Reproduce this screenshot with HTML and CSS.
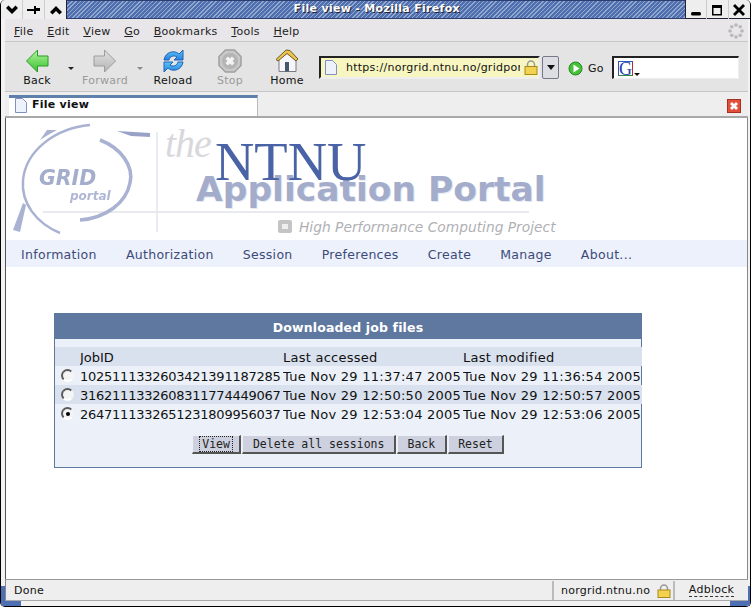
FILE: index.html
```html
<!DOCTYPE html>
<html>
<head>
  <title>File view - Mozilla Firefox</title>
  <link rel="stylesheet" href="styles.css">
</head>
<body>
<div class="window">
  <div class="titlebar">
    <div class="wm-buttons">
      <span class="wm-btn"><svg width="14" height="10" viewBox="0 0 14 10"><path d="M1 3l2.500-2.500L7 4 10.500.5 13 3 7 9z"/></svg></span>
      <span class="wm-btn"><svg width="14" height="10" viewBox="0 0 14 10"><path d="M0 4h7V1h2v2h4v3H9v3H7V6H0z"/></svg></span>
      <span class="wm-btn wm-last"><svg width="14" height="10" viewBox="0 0 14 10"><path d="M1 7l6-6 6 6-2.500 2.500L7 6 3.500 9.500z"/></svg></span>
    </div>
    <div class="title">File view - Mozilla Firefox</div>
    <div class="wm-buttons wm-right">
      <span class="wm-btn"><svg width="12" height="12" viewBox="0 0 12 12"><rect x="1" y="8" width="10" height="3.500" rx="1.500"/></svg></span>
      <span class="wm-btn"><svg width="12" height="12" viewBox="0 0 12 12"><path d="M1 1h10v10.500H1zM2.500 4v6h7V4z" fill-rule="evenodd"/></svg></span>
      <span class="wm-btn"><svg width="12" height="12" viewBox="0 0 12 12"><path d="M0 2l2-2 4 4 4-4 2 2-4 4 4 4-2 2-4-4-4 4-2-2 4-4z"/></svg></span>
    </div>
  </div>

  <div class="chrome">
    <div class="menubar">
      <span class="menu"><u>F</u>ile</span>
      <span class="menu"><u>E</u>dit</span>
      <span class="menu"><u>V</u>iew</span>
      <span class="menu"><u>G</u>o</span>
      <span class="menu"><u>B</u>ookmarks</span>
      <span class="menu"><u>T</u>ools</span>
      <span class="menu"><u>H</u>elp</span>
      <svg class="throbber" width="16" height="16" viewBox="0 0 16 16" fill="#b8b8b8">
        <circle cx="8" cy="2" r="1.800"/><circle cx="12.200" cy="3.800" r="1.800"/><circle cx="14" cy="8" r="1.800"/><circle cx="12.200" cy="12.200" r="1.800"/>
        <circle cx="8" cy="14" r="1.800"/><circle cx="3.800" cy="12.200" r="1.800"/><circle cx="2" cy="8" r="1.800"/><circle cx="3.800" cy="3.800" r="1.800"/>
      </svg>
    </div>

    <div class="toolbar">
      <div class="tool tool-back">
        <svg width="24" height="24" viewBox="0 0 24 24">
          <defs>
            <linearGradient id="green" x1="0" y1="0" x2="0" y2="1"><stop offset="0" stop-color="#b4f59a"/><stop offset="1" stop-color="#35c030"/></linearGradient>
            <linearGradient id="grey" x1="0" y1="0" x2="0" y2="1"><stop offset="0" stop-color="#e2e2e2"/><stop offset="1" stop-color="#b4b4b4"/></linearGradient>
            <linearGradient id="blue" x1="0" y1="0" x2="0" y2="1"><stop offset="0" stop-color="#58c4f4"/><stop offset="1" stop-color="#2a80e0"/></linearGradient>
          </defs>
          <path d="M12.500 1L1.500 12l11 11v-6H23V7H12.500z" fill="url(#green)" stroke="#2a9a2a"/>
        </svg>
        <span>Back</span>
      </div>
      <span class="drop drop-back"></span>
      <div class="tool tool-forward off">
        <svg width="24" height="24" viewBox="0 0 24 24"><path d="M11.500 1l11 11-11 11v-6H1V7h10.500z" fill="url(#grey)" stroke="#9c9c9c"/></svg>
        <span>Forward</span>
      </div>
      <span class="drop drop-forward off"></span>
      <div class="tool tool-reload">
        <svg width="24" height="24" viewBox="0 0 24 24"><path d="M3 11C4 5 9 2 14 3c2 .400 3 1 4 2l4-4v10h-9l3-3c-3-2-7-1-8 3z" fill="url(#blue)" stroke="#1f62b8"/><path d="M22 13c-1 6-6 9-11 8-2-.400-3-1-4-2l-4 4V13h9l-3 3c3 2 7 1 8-3z" fill="url(#blue)" stroke="#1f62b8"/></svg>
        <span>Reload</span>
      </div>
      <div class="tool tool-stop off">
        <svg width="24" height="24" viewBox="0 0 24 24"><path d="M7.500 1h9L23 7.500v9L16.500 23h-9L1 16.500v-9z" fill="#c8c8c8" stroke="#a0a0a0" stroke-width="1.500"/><circle cx="12" cy="12" r="8" fill="#b4b4b4"/><path d="M7.500 10L10 7.500l2 2 2-2 2.500 2.500-2 2 2 2-2.500 2.500-2-2-2 2L7.500 14l2-2z" fill="#f4f4f4"/></svg>
        <span>Stop</span>
      </div>
      <div class="tool tool-home">
        <svg width="24" height="24" viewBox="0 0 24 24"><path d="M4 10l8-6 9 7v11.500H4z" fill="#f6f6fa" stroke="#7a7a86"/><path d="M1 10.500L11 1l4 .500 8 8.500-2 2-9-7.500L3 12z" fill="#eec448" stroke="#6a5a2c"/><path d="M10 13h4v9.500h-4z" fill="#46566e"/></svg>
        <span>Home</span>
      </div>
      <div class="urlbar">
        <svg class="page-icon" width="12" height="15" viewBox="0 0 12 15"><path d="M.500.500h7l4 4v10H.500z" fill="#eef2fb" stroke="#8090c0"/></svg>
        <span class="url">https://norgrid.ntnu.no/gridportal</span>
        <svg class="lock" width="14" height="15" viewBox="0 0 14 15"><path d="M3.500 7V4.500a3.500 3.500 0 017 0V7" fill="none" stroke="#9a9a9a" stroke-width="1.500"/><rect x="1" y="6.500" width="12" height="8" fill="#f2d24e" stroke="#a88a1c"/></svg>
      </div>
      <div class="url-drop"><span></span></div>
      <svg class="go-icon" width="15" height="15" viewBox="0 0 15 15"><circle cx="7.500" cy="7.500" r="6.500" fill="#48c03a" stroke="#1c8a1c"/><path d="M5.500 3.500l6 4-6 4z" fill="#fff"/></svg>
      <span class="go">Go</span>
      <div class="search">
        <div class="google">G</div>
        <span class="search-drop"></span>
      </div>
    </div>

    <div class="tabbar">
      <div class="tab">
        <svg width="12" height="15" viewBox="0 0 12 15"><path d="M.500.500h7l4 4v10H.500z" fill="#eef2fb" stroke="#8090c0"/></svg>
        <span>File view</span>
      </div>
      <svg class="tab-close" width="14" height="14" viewBox="0 0 14 14"><rect x=".500" y=".500" width="13" height="13" fill="#e2503c" stroke="#a83020"/><path d="M3 5l2-2 2 2 2-2 2 2-2 2 2 2-2 2-2-2-2 2-2-2 2-2z" fill="#fff"/></svg>
    </div>
  </div>

  <div class="content">
    <div class="banner">
      <svg width="560" height="122" viewBox="0 0 560 122">
        <defs><filter id="soft"><feGaussianBlur stdDeviation=".6"/></filter></defs>
        <path d="M37 94H523" stroke="#e8eaf0" stroke-width="2"/>
        <path d="M151 14V114" stroke="#e4e6ec" stroke-width="1.500"/>
        <g filter="url(#soft)" fill="none" stroke="#a9b2d2">
          <path d="M84 7C50 10 20 32 17 62C15 85 30 105 54 115" stroke-width="2.500"/>
          <path d="M94 22C115 30 128 48 124 65C120 85 100 100 74 102" stroke-width="3.500"/>
          <path d="M111 13L144 15L144 19L125 18z" stroke-width="0" fill="#98a2c6"/>
          <path d="M34 22L41 12L51 12L42 17z" stroke-width="0" fill="#a9b2d2"/>
          <path d="M7 112L17 85L20 87L14 114z" stroke-width="0" fill="#a9b2d2"/>
          <text class="logo-grid" x="33" y="67">GRID</text>
          <text class="logo-portal" x="64" y="82">portal</text>
        </g>
        <text class="logo-the" x="159" y="39">the</text>
        <text class="logo-app-shadow" x="191" y="84">Application Portal</text>
        <text class="logo-app" x="190" y="83">Application Portal</text>
        <text class="logo-ntnu" x="209" y="62">NTNU</text>
        <rect x="272" y="102" width="14" height="13" rx="2" fill="#c4c4c4"/>
        <rect x="276" y="106" width="6" height="5" fill="#eee"/>
        <text class="logo-hpc" x="293" y="114">High Performance Computing Project</text>
      </svg>
    </div>
    <div class="nav">
      <a class="nav-item">Information</a>
      <a class="nav-item">Authorization</a>
      <a class="nav-item">Session</a>
      <a class="nav-item">Preferences</a>
      <a class="nav-item">Create</a>
      <a class="nav-item">Manage</a>
      <a class="nav-item">About...</a>
    </div>

    <div class="panel">
      <div class="panel-head">Downloaded job files</div>
      <div class="panel-body">
        <table class="jobs">
          <tr class="shade">
            <th class="radio-cell"></th><th class="col-id">JobID</th><th class="col-date">Last accessed</th><th class="col-date">Last modified</th>
          </tr>
          <tr>
            <td class="radio-cell"><span class="radio"></span></td>
            <td class="col-id">1025111332603421391187285</td>
            <td class="col-date">Tue Nov 29 11:37:47 2005</td>
            <td class="col-date">Tue Nov 29 11:36:54 2005</td>
          </tr>
          <tr class="shade">
            <td class="radio-cell"><span class="radio"></span></td>
            <td class="col-id">3162111332608311774449067</td>
            <td class="col-date">Tue Nov 29 12:50:50 2005</td>
            <td class="col-date">Tue Nov 29 12:50:57 2005</td>
          </tr>
          <tr>
            <td class="radio-cell"><span class="radio checked"></span></td>
            <td class="col-id">2647111332651231809956037</td>
            <td class="col-date">Tue Nov 29 12:53:04 2005</td>
            <td class="col-date">Tue Nov 29 12:53:06 2005</td>
          </tr>
        </table>
        <div class="actions">
          <button class="btn btn-focus"><span>View</span></button>
          <button class="btn">Delete all sessions</button>
          <button class="btn">Back</button>
          <button class="btn">Reset</button>
        </div>
      </div>
    </div>
  </div>

  <div class="statusbar">
    <div class="status status-main">Done</div>
    <div class="status status-site">norgrid.ntnu.no
      <svg width="14" height="14" viewBox="0 0 14 14"><path d="M3.500 7V4.500a3.500 3.500 0 017 0V7" fill="none" stroke="#9a9a9a" stroke-width="1.500"/><rect x="1" y="6" width="12" height="7.500" fill="#f2d24e" stroke="#a88a1c"/></svg>
    </div>
    <div class="status status-adblock"><span>Adblock</span></div>
  </div>
  <div class="grip"></div>
  <div class="corner corner-left"></div>
  <div class="corner corner-right"></div>
</div>
</body>
</html>
```

FILE: styles.css
```css
html, body {
  margin: 0;
  padding: 0;
}

body {
  width: 752px;
  height: 608px;
  overflow: hidden;
  background: #fff;
  font-family: "DejaVu Sans", sans-serif;
  font-size: 11px;
  color: #111;
}

.window {
  position: relative;
  width: 751px;
  height: 607px;
  box-sizing: border-box;
  display: flex;
  flex-direction: column;
  background: #f2f2f2;
  border: 1px solid #000;
  border-top: 0;
  border-radius: 5px;
  overflow: hidden;
}

/* title bar */
.titlebar {
  height: 19px;
  flex: none;
  display: flex;
  background: repeating-linear-gradient(135deg, #4f6fae 0, #4f6fae 2px, #93a8d0 2px, #93a8d0 3px);
  border-top: 1px solid #2c3f70;
  box-sizing: border-box;
  border-bottom: 1px solid #2c3f70;
}

.title {
  flex: 1;
  text-align: center;
  color: #fff;
  font-weight: bold;
  font-size: 11px;
  line-height: 16px;
  letter-spacing: .3px;
  padding-left: 2px;
  text-shadow: 1px 1px 0 #223;
}

.wm-buttons {
  display: flex;
  background: #eeeeee;
  margin-top: -1px;
  margin-bottom: -1px;
}

.wm-btn {
  width: 22px;
  height: 19px;
  display: flex;
  align-items: center;
  justify-content: center;
  border-right: 1px solid #ccc;
  box-sizing: border-box;
}

.wm-right .wm-btn { width: 21.500px; }
.wm-right .wm-btn:last-child { border-right: 0; }
.wm-last { border-right: 1px solid #223; }
.wm-right { border-left: 1px solid #223; border-bottom: 1px solid #223; }

/* menu and tool bars */
.chrome {
  flex: none;
  margin-left: 4px;
  margin-right: 2px;
  letter-spacing: .25px;
}

.menubar {
  height: 23px;
  box-sizing: border-box;
  padding: 2px 0 0 9px;
  display: flex;
  align-items: center;
  gap: 13.800px;
  background: #e9e6e9;
  border-bottom: 1px solid #c8c8c8;
  box-shadow: 0 1px 0 #f8f8f8;
}

.menu { color: #222; }

.throbber { margin-left: auto; margin-right: 4px; }

.toolbar {
  height: 50px;
  display: flex;
  position: relative;
  align-items: flex-start;
  background: #e4e4e4;
  border-bottom: 1px solid #c6c6c6;
  box-sizing: border-box;
}

.tool {
  display: flex;
  flex-direction: column;
  align-items: center;
  gap: 1px;
  padding-top: 7px;
}

.tool span { line-height: 13px; }
.off { color: #9a9a9a; }

.tool-back { width: 48px; margin-left: 8px; }
.tool-forward { width: 56px; margin-left: 3px; }
.tool-reload { width: 50px; margin-left: 5px; }
.tool-stop { width: 40px; margin-left: 12px; }
.tool-home { width: 44px; margin-left: 15px; }

.drop {
  width: 0;
  height: 0;
  margin-top: 25px;
  border: 3px solid transparent;
  border-top: 3px solid #222;
  border-bottom: 0;
}

.drop-back { margin-left: 7px; }
.drop-forward { margin-left: 4px; }
.drop.off { border-top-color: #8a8a8a; }

.urlbar {
  width: 221px;
  height: 23px;
  box-sizing: border-box;
  margin-top: 14px;
  margin-left: 10px;
  display: flex;
  align-items: center;
  background: #f8f6c0;
  border: 2px solid #222;
  border-right-color: #eee;
  border-bottom-color: #eee;
  padding-left: 4px;
}

.url {
  width: 174px;
  margin-left: 9px;
  overflow: hidden;
  white-space: nowrap;
  color: #111;
}

.lock { margin-left: 4px; }

.url-drop {
  width: 17px;
  height: 23px;
  box-sizing: border-box;
  margin-top: 14px;
  margin-left: 2px;
  border: 1px solid #778;
  border-radius: 2px;
  background: #dddde4;
  display: flex;
  align-items: center;
  justify-content: center;
}

.url-drop span {
  border: 4px solid transparent;
  border-top: 5px solid #111;
  border-bottom: 0;
}

.go-icon { margin-top: 19px; margin-left: 9px; }
.go { width: 16px; margin-top: 20px; margin-left: 5px; line-height: 13px; }

.search {
  position: relative;
  width: 127px;
  height: 23px;
  box-sizing: border-box;
  margin-top: 14px;
  margin-left: 8px;
  background: #fff;
  border: 2px solid #222;
  border-right: 1px solid #eee;
  border-bottom: 1px solid #eee;
  padding: 3px 0 0 4px;
}

.google {
  width: 13px;
  height: 13px;
  border: 1px solid #2a8a3a;
  border-top-color: #2a5ac0;
  border-left-color: #2a5ac0;
  border-right-color: #c02a2a;
  background: #fff;
  color: #2040b0;
  font-family: "Liberation Serif", serif;
  font-size: 18px;
  line-height: 14px;
  text-align: center;
}

.search-drop {
  position: absolute;
  left: 20px;
  top: 15px;
  border: 3px solid transparent;
  border-top: 3px solid #111;
  border-bottom: 0;
}

.tabbar {
  height: 26px;
  box-sizing: border-box;
  display: flex;
  align-items: flex-start;
  background: #eeeeee;
  border-bottom: 2px solid #a8a8a8;
}

.tab {
  width: 249px;
  height: 21px;
  margin-top: 3px;
  margin-left: 4px;
  padding-left: 6px;
  box-sizing: border-box;
  display: flex;
  gap: 5px;
  align-items: flex-start;
  background: #fff;
  border-top: 3px solid #6080ac;
  border-right: 1px solid #bbb;
  font-weight: bold;
  font-size: 11px;
  line-height: 14px;
}

.tab-close { margin-left: auto; margin-right: 7px; margin-top: 7px; }

/* page */
.content {
  flex: 1;
  min-height: 0;
  margin-left: 4px;
  margin-right: 2px;
  background: #fff;
  border-left: 1px solid #555;
  border-right: 1px solid #888;
}

.banner { height: 122px; }
.banner svg { display: block; }

.logo-grid { font: italic bold 20.500px "DejaVu Sans", sans-serif; fill: #a4adcc; stroke: none; }
.logo-portal { font: italic bold 12px "DejaVu Sans", sans-serif; fill: #aeb6d4; stroke: none; }
.logo-the { font: italic 40px "Liberation Serif", serif; fill: #d8d8dc; letter-spacing: -1px; }
.logo-ntnu { font: 54.500px "Liberation Serif", serif; fill: #4a62a6; }
.logo-app { font: bold 34.500px "DejaVu Sans", sans-serif; fill: #a3adcb; }
.logo-app-shadow { font: bold 34.500px "DejaVu Sans", sans-serif; fill: #e6e9f2; }
.logo-hpc { font: italic 13.800px "DejaVu Sans", sans-serif; fill: #b0b0b4; }

.nav {
  height: 27px;
  box-sizing: border-box;
  padding-top: 2px;
  padding-left: 15px;
  display: flex;
  align-items: center;
  gap: 29.100px;
  background: #ecf1fc;
}

.nav-item {
  font-size: 12.500px;
  letter-spacing: .31px;
  color: #3c4a78;
}

.panel {
  width: 588px;
  box-sizing: border-box;
  margin: 46px 0 0 48px;
  border: 1px solid #5f789f;
  background: #ecf1f9;
}

.panel-head {
  height: 25px;
  background: #5f789f;
  color: #fff;
  font-weight: bold;
  font-size: 12.500px;
  letter-spacing: .15px;
  line-height: 28px;
  text-align: center;
}

.panel-body { padding-top: 8px; padding-bottom: 13px; }

.jobs {
  width: 587px;
  table-layout: fixed;
  border-collapse: collapse;
  font-size: 13px;
  color: #111;
}

.jobs th, .jobs td {
  box-sizing: border-box;
  padding: 1px 0 0;
  height: 19px;
  font-weight: normal;
  text-align: left;
  white-space: nowrap;
  overflow: hidden;
}

.jobs .shade { background: #d9e1ee; }

.jobs .radio-cell { width: 25px; padding-top: 0; }
.jobs td.col-id { letter-spacing: -.25px; }
.jobs .col-id { width: 203px; }
.jobs .col-date { letter-spacing: .25px; }
.jobs th.col-date:nth-child(3), .jobs td.col-date:nth-child(3) { width: 180px; }

.radio {
  display: block;
  width: 13px;
  height: 13px;
  margin-left: 6px;
  box-sizing: border-box;
  border-radius: 50%;
  background: #f4f4f4;
  border: 2px solid;
  border-color: #5a5a5a #f4f4f4 #fff #5a5a5a;
  position: relative;
}

.radio.checked::after {
  content: "";
  position: absolute;
  left: 2.500px;
  top: 2.500px;
  width: 4px;
  height: 4px;
  border-radius: 50%;
  background: #000;
}

.actions {
  display: flex;
  justify-content: center;
  gap: 1px;
  margin-top: 12px;
}

.btn {
  height: 19px;
  padding: 0 9.500px;
  background: #cdd0de;
  color: #222;
  border: 1px solid;
  border-color: #eef0f6 #555 #555 #eef0f6;
  border-width: 1px 2px 2px 1px;
  font-family: "DejaVu Sans Mono", monospace;
  font-size: 11.500px;
}

.btn-focus { padding: 0 6.500px; }
.btn-focus span { border: 1px dotted #222; padding: 0 2px; }

.statusbar {
  flex: none;
  height: 22px;
  padding-top: 1px;
  margin-left: 4px;
  margin-right: 2px;
  display: flex;
  background: #eeeeee;
  border-top: 1px solid #999;
  border-bottom: 1px solid #aaa;
  border-left: 1px solid #888;
  box-sizing: border-box;
  letter-spacing: .25px;
}

.status {
  display: flex;
  align-items: center;
  gap: 7px;
  border-right: 2px solid #bbb;
  box-sizing: border-box;
  padding-left: 8px;
}

.status-main { width: 548px; }
.status-site { width: 121px; padding-left: 7px; }
.status-adblock { flex: 1; border-right: 0; justify-content: center; padding-left: 0; }
.status-adblock span { border-bottom: 1px dashed #333; line-height: 12px; }

.grip {
  flex: none;
  height: 5px;
  background: #f2f2f2;
}

/* blue resize corners of the window frame */
.corner {
  position: absolute;
  bottom: 0;
  width: 20px;
  height: 20px;
  box-sizing: border-box;
  border-bottom: 5px solid #4f6fb5;
}

.corner-left { left: 0; border-left: 4px solid #4f6fb5; }
.corner-right { right: 0; border-right: 2px solid #4f6fb5; }
```
